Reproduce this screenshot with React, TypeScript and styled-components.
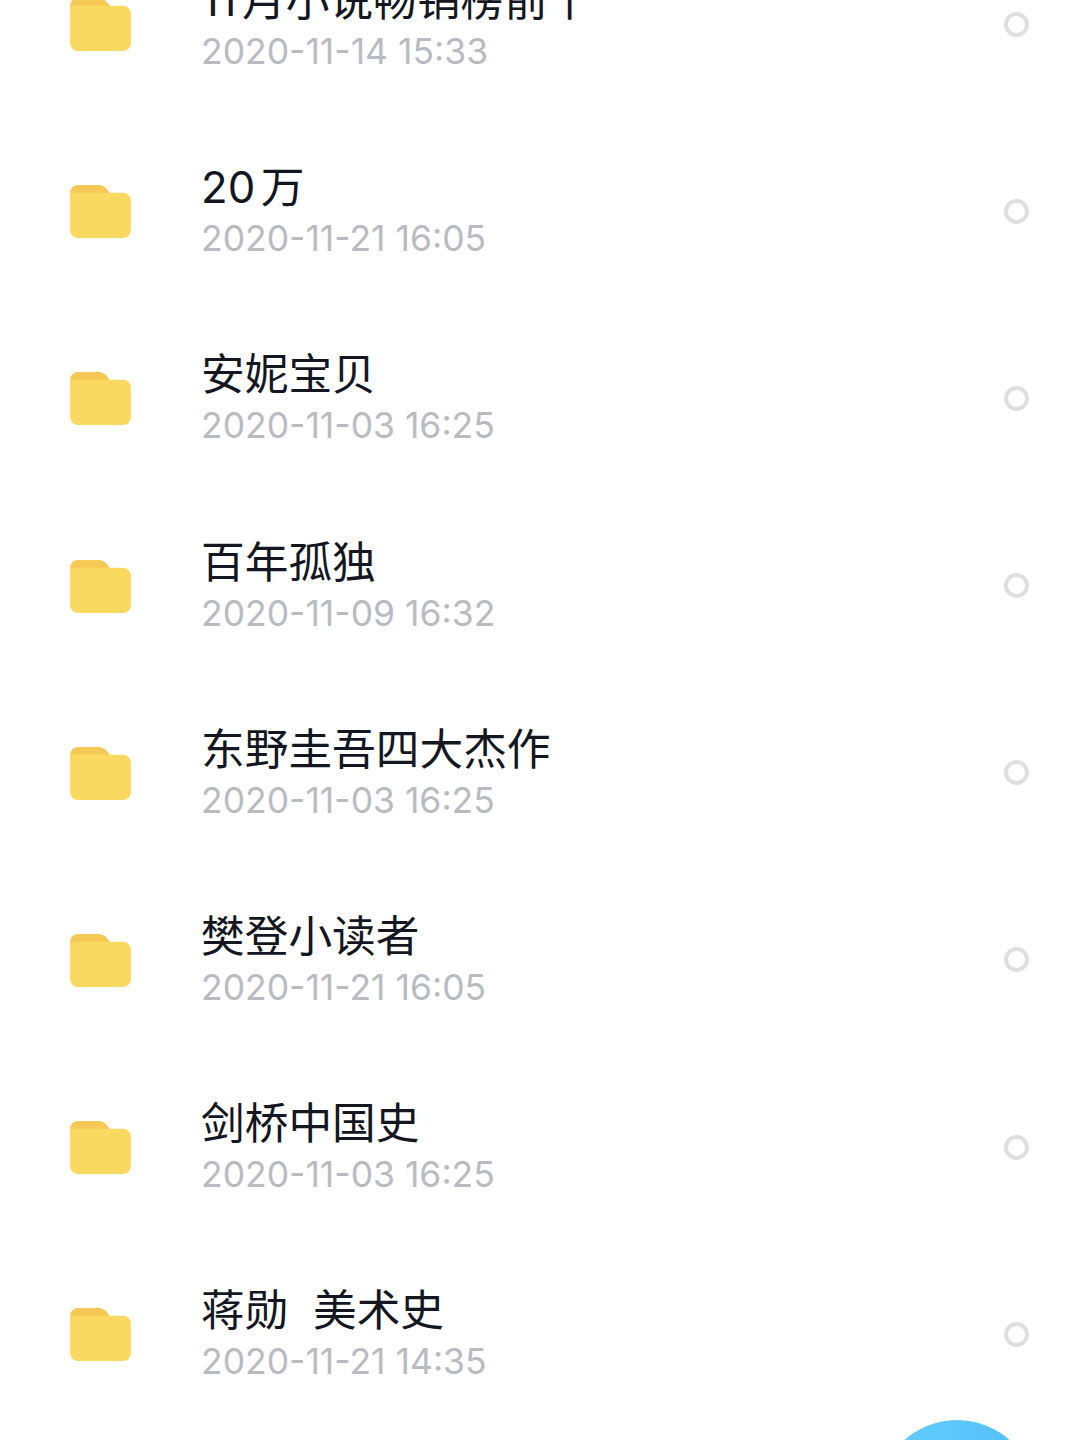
import React from 'react';
import styled, { createGlobalStyle } from 'styled-components';

const GlobalStyle = createGlobalStyle`
  html, body {
    margin: 0;
    padding: 0;
    background: #fff;
  }
`;

const Screen = styled.div`
  position: relative;
  width: 1080px;
  height: 1440px;
  overflow: hidden;
  background: #fff;
  font-family: Inter, "Noto Sans CJK SC", sans-serif;
`;

const List = styled.ul`
  list-style: none;
  margin: -69.6px 0 0;
  padding: 0;
`;

const Row = styled.li`
  display: flex;
  align-items: center;
  height: 187.2px;
  padding: 0 51px 0 70px;
  box-sizing: border-box;
`;

const FolderIcon = styled.svg`
  flex: none;
  width: 61px;
  height: 53px;
  margin: 1px 70px 0 0;
`;

const Info = styled.div`
  flex: 1;
  min-width: 0;
`;

const Title = styled.div`
  height: 50px;
  margin-top: 1px;
  font-size: 43.7px;
  line-height: 50px;
  color: #141722;
  white-space: pre;
  text-autospace: normal;
`;

const Time = styled.div`
  margin-top: 5px;
  font-size: 35.5px;
  line-height: 42px;
  color: #b9bbc3;
  white-space: nowrap;
`;

const Radio = styled.span`
  flex: none;
  width: 25px;
  height: 25px;
  box-sizing: border-box;
  border: 4px solid #dfdfdf;
  border-radius: 50%;
`;

const Fab = styled.div`
  position: absolute;
  left: 878px;
  top: 1420px;
  width: 158px;
  height: 158px;
  border-radius: 50%;
  background: linear-gradient(100deg, #62cffb, #52bcfb);
`;

const folders = [
  { name: '11月小说畅销榜前十', time: '2020-11-14 15:33' },
  { name: '20万', time: '2020-11-21 16:05' },
  { name: '安妮宝贝', time: '2020-11-03 16:25' },
  { name: '百年孤独', time: '2020-11-09 16:32' },
  { name: '东野圭吾四大杰作', time: '2020-11-03 16:25' },
  { name: '樊登小读者', time: '2020-11-21 16:05' },
  { name: '剑桥中国史', time: '2020-11-03 16:25' },
  { name: '蒋勋  美术史', time: '2020-11-21 14:35' },
];

const Folder = () => (
  <FolderIcon viewBox="0 0 62 54">
    <path
      d="M0 8a8 8 0 0 1 8-8h20c5 0 8 2 11 6l3 4H0z"
      fill="#f6c855"
    />
    <path
      d="M0 8h54a8 8 0 0 1 8 8v30a8 8 0 0 1-8 8H8a8 8 0 0 1-8-8z"
      fill="#fad961"
    />
  </FolderIcon>
);

const App: React.FC = () => {
  return (
    <Screen>
      <GlobalStyle />
      <List>
        {folders.map((item) => (
          <Row key={item.name}>
            <Folder />
            <Info>
              <Title>{item.name}</Title>
              <Time>{item.time}</Time>
            </Info>
            <Radio />
          </Row>
        ))}
      </List>
      <Fab />
    </Screen>
  );
};

export default App;
